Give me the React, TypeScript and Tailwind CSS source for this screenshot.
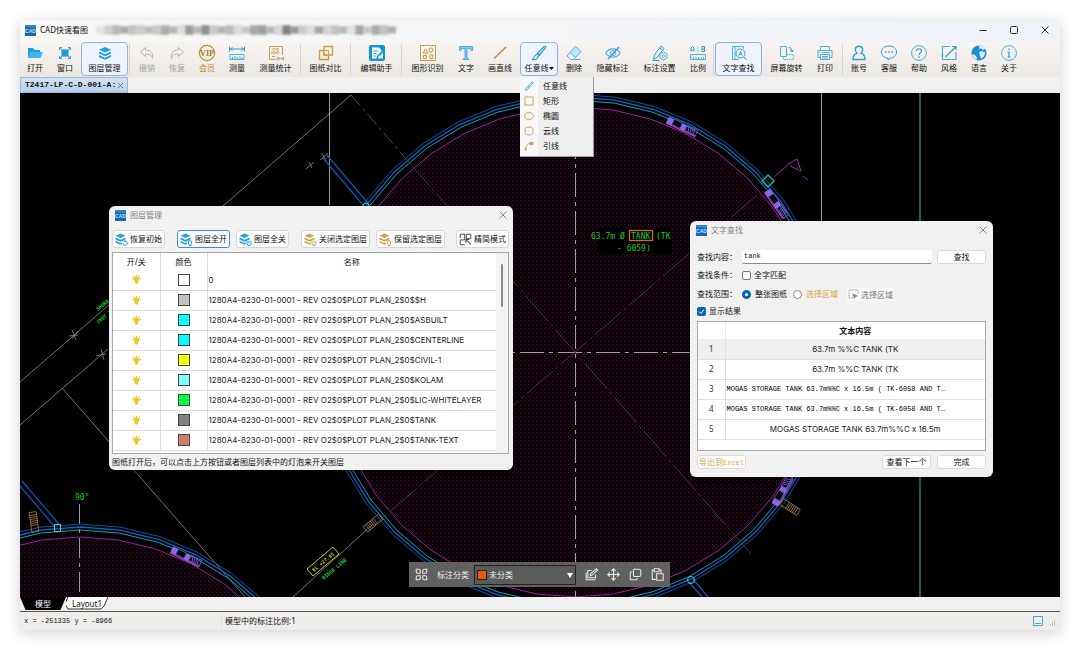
import React from 'react';
import { clsx } from 'clsx';

const BLUE = '#2a9fd8';
const SKY = '#4fb0e0';
const GOLD = '#c9a04a';
const GREY = '#b4b4b4';

const ICONS: Record<string, React.ReactNode> = {
  open: (
    <>
      <path d="M1 13V3h5l1.500 2H13v2H4z" fill="#1b9be0" />
      <path d="M4 7h12l-2.500 6H1z" fill="#3db5f0" />
    </>
  ),
  window: (
    <>
      <path d="M5 5h6v6H5z" fill="#1b9be0" stroke="#1b9be0" />
      <path d="M2.500 5V2.500H5M11 2.500h2.500V5M13.500 11v2.500H11M5 13.500H2.500V11M3 3l2 2M13 3l-2 2M13 13l-2-2M3 13l2-2" stroke={BLUE} />
    </>
  ),
  layers: (
    <>
      <path d="M8 2l6 2.800L8 7.500 2 4.800z" fill="#1e9fe2" />
      <path d="M2 6.500v2l6 2.800 6-2.800v-2L8 9.300z" fill="#1e9fe2" />
      <path d="M2 10v2l6 2.800L14 12v-2l-6 2.800z" fill="#1e9fe2" />
    </>
  ),
  undo: <path d="M6.500 2.500L1.500 7l5 4.500V9c4 0 6 1 7 4.500C14.500 8 12 5 6.500 5z" stroke={GREY} />,
  redo: <path d="M9.500 2.500l5 4.500-5 4.500V9c-4 0-6 1-7 4.500C1.500 8 4 5 9.500 5z" stroke={GREY} />,
  vip: (
    <>
      <circle cx="8" cy="8" r="7.600" stroke="#bd8a2c" strokeWidth="1.200" />
      <text x="8" y="10.700" fontSize="8" fontWeight="700" fontFamily="Liberation Serif, serif" textAnchor="middle" fill="#a8741c">VIP</text>
    </>
  ),
  measure: (
    <>
      <path d="M.5 1.500v5M15.500 1.500v5M1 4h14M3.500 2.500L1.500 4l2 1.500M12.500 2.500l2 1.500-2 1.500" stroke={BLUE} />
      <path d="M1 9.500h14v5H1zM3.500 14v-2M6 14v-3M8.500 14v-2M11 14v-3M13 14v-2" stroke={SKY} />
    </>
  ),
  stats: (
    <>
      <path d="M7 14.500H1.500v-13h13V10M4 9V6.500M6 9V5.500M8 9V6.500M10 9V4.500M4 4.500L6 3.500l2 1 3-1.500M4 11.500h3" stroke={GOLD} />
      <path d="M9 11.500v4M15.500 11.500v4M9.500 13.500h5.500M11.500 12l-1.500 1.500 1.500 1.500M13.500 12l1.500 1.500-1.500 1.500" stroke={GOLD} strokeWidth=".8" />
    </>
  ),
  compare: (
    <>
      <path d="M5.500 5.500h-4v9h9v-4" stroke={GOLD} strokeWidth="1.400" />
      <path d="M6 1.500h8.500V10H6z" stroke={GOLD} strokeWidth="1.400" />
      <path d="M5.500 5.500h5v5h-5z" stroke={GOLD} />
    </>
  ),
  editor: (
    <>
      <rect x="0" y="0" width="16" height="16" rx="2" fill="#0f95dc" />
      <path d="M3 2.500h7L12.500 5v1L8 11l-.5 2.500H3z" fill="#fff" />
      <path d="M4.500 6h4M4.500 8.500h3M4.500 11h2" stroke="#0f95dc" />
      <path d="M9 13.500l.5-2.500L14 6.500v7z" fill="#e5f5fd" />
      <path d="M9.500 9l1.500 1.500 3.500-4" stroke="#0f95dc" />
    </>
  ),
  shapes: (
    <>
      <path d="M.5.500h15v15H.5z" stroke={GOLD} />
      <path d="M3 8l2.500-4L8 8z" stroke={GOLD} />
      <circle cx="11" cy="5" r="2" stroke={GOLD} />
      <path d="M3.500 10.500h3v3h-3zM10 10h3v3.500h-3z" stroke={GOLD} />
    </>
  ),
  text: (
    <path d="M1.500 1.500h13v4h-1.500l-.5-2H9v10l2 .5v.5H5V14l2-.5v-10H3.500l-.5 2H1.500z" stroke={SKY} fill="#7cc7ec" />
  ),
  line: <path d="M2 13.500L14 2" stroke="#b98f45" strokeWidth="1.500" />,
  brush: (
    <>
      <path d="M6.500 8.500L13 1.500c1.500-.5 2 .5 1.500 1.500L8.500 10z" stroke={BLUE} fill="#d5ecfa" strokeWidth="1.200" />
      <path d="M6.500 8.500l2 2-1.500 1c-.5 2.500-2.500 3.500-5.500 3 1.500-1 1-3.500 3-4z" stroke={BLUE} strokeWidth="1.200" />
    </>
  ),
  eraser: (
    <>
      <path d="M9.500 1.500l5.500 5-5.500 6-5.500-5z" fill="#bfe5f7" stroke={SKY} />
      <path d="M4 7.500l-3 3.500 3.500 3.500h3l2-2M7.500 14.500h7" stroke={SKY} />
    </>
  ),
  hide: (
    <>
      <path d="M.8 8C4 2.500 12 2.500 15.200 8 12 13.500 4 13.500.8 8z" stroke={SKY} strokeWidth="1.200" />
      <circle cx="8" cy="8" r="2.500" stroke={SKY} />
      <path d="M14 2L3 14" stroke={BLUE} strokeWidth="1.200" />
    </>
  ),
  settings: (
    <>
      <path d="M9 1l3 2.500-7 9L1.500 14.500 2.500 10zM8 3l3 2.500M.5 15.500h7" stroke={BLUE} />
      <path d="M11.500 7l3.500 2v4l-3.500 2L8 13V9z" fill="#f3f1ee" stroke={SKY} />
      <circle cx="11.500" cy="11" r="1.300" stroke={SKY} />
    </>
  ),
  ratio: (
    <>
      <path d="M1 6.500V3l1.500-1.500L4 3v3.500M1 5h3M8 2.500v1M8 5.500v1M12 1.500v5h2.500v-5zM12 4h3" stroke={BLUE} />
      <path d="M.5 9.500h15v5H.5zM3.500 14v-2M6 14v-2M8.500 14v-2M11 14v-2M13.500 14v-2" stroke={SKY} />
    </>
  ),
  search: (
    <>
      <path d="M1.500 1.500h11v2M1.500 1.500v13H8M4 1.500v13" stroke={SKY} />
      <circle cx="9.500" cy="8.500" r="4.500" stroke={BLUE} />
      <path d="M13 12l2.500 3M8 10.500l1.500-4 1.500 4M8.500 9.300h2" stroke={BLUE} />
    </>
  ),
  rotate: (
    <>
      <path d="M1.500 1.500h6v10h-6z" stroke={SKY} />
      <path d="M7.500 9.500h7v5h-10v-3" stroke={SKY} strokeDasharray="1.500 1" />
      <path d="M9.500 2.500c2.500 0 3.500 1.500 3.500 4M11.500 5l1.500 2 1.500-2" stroke={BLUE} />
    </>
  ),
  print: (
    <>
      <path d="M3.500 5.500v-4h9v4M3.500 12.500H1v-7h14v7h-2.500" stroke={SKY} />
      <path d="M3.500 9.500h9v5h-9zM5 11.500h6M5 13h6M2.500 7.500h1M5 7.500h8" stroke={SKY} />
    </>
  ),
  account: (
    <path d="M8 1.200c4.500 0 4.500 5 2 7 3 1 4 3.300 4 6.300H2c0-3 1-5.300 4-6.300-2.500-2-2.500-7 2-7z" stroke={BLUE} strokeWidth="1.400" />
  ),
  service: (
    <>
      <path d="M8 1c4.500 0 7.500 2.500 7.500 6s-3 6-6 6L7 15v-2C3 13 .5 10.500.5 7S3.500 1 8 1z" stroke={BLUE} />
      <path d="M4 6.300h1.500v1.500H4zM7.300 6.300h1.500v1.500H7.300zM10.500 6.300H12v1.500h-1.500z" fill={BLUE} />
    </>
  ),
  help: (
    <>
      <circle cx="8" cy="8" r="7.400" stroke={SKY} />
      <path d="M5.500 6c0-3 5-3 5 0 0 1.500-2.500 2-2.500 4M8 11.300v1.400" stroke={BLUE} strokeWidth="1.200" />
    </>
  ),
  style: (
    <>
      <path d="M9 1.500H1.500v13H15V7" stroke={SKY} strokeWidth="1.200" />
      <path d="M11 1.500h4V5M15 1.500L4.500 12M1.500 12V9M5 14.500h3" stroke={BLUE} strokeWidth="1.200" />
    </>
  ),
  language: (
    <>
      <circle cx="8" cy="8" r="7.600" fill="#1d8fd0" />
      <path d="M8 .8c3 0 5 1.200 6.300 3.200L12 5 10 3.500 8.500 4zM8 7l3-1 3 1.500-.5 3L10.500 14 9 11z" fill="#d9eefa" />
      <path d="M1 9l3 1 2 2.500-.5 2.300C3 14 1 12 1 9z" fill="#d9eefa" />
    </>
  ),
  about: (
    <>
      <circle cx="8" cy="8" r="7.400" stroke={SKY} />
      <path d="M8 3.500v1.500M6.500 7H8v5M6.500 12h3" stroke={BLUE} strokeWidth="1.200" />
    </>
  ),
  rect: <path d="M1.500 1.500h13v13h-13z" stroke={GOLD} strokeWidth="1.500" />,
  ellipse: <ellipse cx="8" cy="8" rx="7" ry="5.500" stroke={GOLD} strokeWidth="1.500" />,
  cloud: (
    <path d="M3 3q1-2 3-1 2-1 4 0 2-1 3 1 2 1 1 3 1 2 0 4 1 2-1 3-1 2-3 1-2 1-4 0-2 1-3-1-2-1-1-3-1-2 0-4-1-2 1-3z" stroke={GOLD} strokeWidth="1.500" />
  ),
  leader: (
    <>
      <path d="M2 15l-.5-3 3 1zM3 12C4 6 6 4 10 4" fill="none" stroke={GOLD} strokeWidth="1.600" />
      <path d="M9 1.500h6v5H9z" fill={GOLD} />
    </>
  ),
  simple: (
    <>
      <path d="M7 14.500H1.500v-6H7M1.500 6V1.500H7v7M9 1.500h5.500V7H9z" stroke="#444" strokeWidth="1.200" />
      <path d="M8.500 8l6 6M8.500 12V8h4" stroke="#444" strokeWidth="1.300" />
    </>
  ),
  pick: (
    <>
      <path d="M7 13H1.500V1.500h13V7" stroke="#999" strokeDasharray="2.500 1.200" strokeWidth="1.300" />
      <path d="M6 6l9 4-4 1.500L9 15z" fill="#888" />
    </>
  ),
  bulb: (
    <>
      <path d="M8 3c6 0 6.500 5 3 7.500L10.500 15h-5L5 10.500C1.500 8 2 3 8 3z" fill="#ecc81a" />
      <path d="M8 0v2.500M2.500 1l2 2.500M13.500 1l-2 2.500M0 6.500h2.500M13.500 6.500H16" stroke="#dcb62a" strokeWidth="1.800" />
    </>
  ),
  grid: (
    <path d="M1.500 1.500h3a2 2 0 012 2v3h-3a2 2 0 01-2-2zM14.500 1.500h-3a2 2 0 00-2 2v3h3a2 2 0 002-2zM1.500 14.500v-3a2 2 0 012-2h3v3a2 2 0 01-2 2zM14.500 14.500h-3a2 2 0 01-2-2v-3h3a2 2 0 012 2z" stroke="#e8e8e8" strokeWidth="1.300" />
  ),
  edit: (
    <path d="M8 3H3.500v9H13V8M6.500 9.500L7 7l7-6 1.500 1.500-7 6.500zM1.500 5.500v9H13" stroke="#e8e8e8" strokeWidth="1.300" />
  ),
  move: (
    <path d="M8 1v14M1 8h14M5.500 3.500L8 1l2.500 2.500M5.500 12.500L8 15l2.500-2.500M3.500 5.500L1 8l2.500 2.500M12.500 5.500L15 8l-2.500 2.500" stroke="#e8e8e8" strokeWidth="1.500" />
  ),
  copy: (
    <path d="M6.500 1.500h6a2 2 0 012 2v5a2 2 0 01-2 2h-6a1 1 0 01-1-1v-7a1 1 0 011-1zM4 5H2.500a1 1 0 00-1 1v7.500a1 1 0 001 1H9a1 1 0 001-1V12" stroke="#e8e8e8" strokeWidth="1.300" />
  ),
  paste: (
    <path d="M6 14H1.500V2.500H4M10 2.500h2.500V6M4 1h6v3.500H4zM7 7h8v8H7z" stroke="#e8e8e8" strokeWidth="1.300" />
  ),
};

const Icon: React.FC<{ name: string; size?: number }> = ({ name, size = 16 }) => (
  <svg width={size} height={size} viewBox="0 0 16 16" fill="none" className="shrink-0 overflow-visible" aria-hidden="true">
    {ICONS[name]}
  </svg>
);

const AppLogo: React.FC = () => (
  <svg width="11" height="11" viewBox="0 0 11 11" className="shrink-0" aria-hidden="true">
    <rect width="11" height="11" fill="#1767b5" />
    <path d="M0 0h11v3L0 2z" fill="#2d87d6" />
    <text x="5.500" y="7.500" fontSize="5" fontWeight="700" textAnchor="middle" fill="#bfe0fa" fontFamily="Liberation Sans, sans-serif">CAD</text>
  </svg>
);

// Stacked sheets with a small badge in the lower right corner
const LayerIcon: React.FC<{ color: string; badge: string }> = ({ color, badge }) => (
  <svg width="13" height="13" viewBox="0 0 13 13" fill="none" className="shrink-0" aria-hidden="true">
    <path d="M5.500.500l5 2.300-5 2.200-5-2.200z" fill={color} />
    <path d="M.5 4.500l5 2.300 5-2.300v2l-3 1.500-2 .8-5-2.300zM.5 7.800l5 2.200 1.500-.5V11l-1.500.8-5-2.300z" fill={color} />
    {badge === 'reset' && <path d="M8 10.500a2.200 2.200 0 102-2.500M8.500 8l1.500-.2.3 1.500" stroke={color} />}
    {badge === 'on' && <path d="M10 7.500a2 2 0 011 3.500v1.500H9V11a2 2 0 011-3.500z" fill="#fff" stroke={color} />}
    {badge === 'off' && <path d="M8 8v2.500a2 2 0 004 0V8M10 7.500v3M9 12.500h2" stroke={color} />}
  </svg>
);

type Tool = { icon: string; label: string; w: string; active?: boolean; tone?: string; menu?: boolean };

const W2 = 'w-[30px]';
const W3 = 'w-[38px]';
const W4 = 'w-[47px]';

const TOOL_GROUPS: { sep: string; tools: Tool[] }[] = [
  {
    sep: 'mr-0.5',
    tools: [
      { icon: 'open', label: '打开', w: W2 },
      { icon: 'window', label: '窗口', w: W2 },
      { icon: 'layers', label: '图层管理', w: W4, active: true },
    ],
  },
  {
    sep: 'mx-px',
    tools: [
      { icon: 'undo', label: '撤销', w: W2, tone: 'text-[#a5a5a5]' },
      { icon: 'redo', label: '恢复', w: W2, tone: 'text-[#a5a5a5]' },
      { icon: 'vip', label: '会员', w: W2, tone: 'text-[#c08a2e]' },
      { icon: 'measure', label: '测量', w: W2 },
      { icon: 'stats', label: '测量统计', w: W4 },
    ],
  },
  { sep: 'ml-px mr-0.5', tools: [{ icon: 'compare', label: '图纸对比', w: W4 }] },
  { sep: 'ml-px mr-0.5', tools: [{ icon: 'editor', label: '编辑助手', w: W4 }] },
  {
    sep: '',
    tools: [
      { icon: 'shapes', label: '图形识别', w: W4 },
      { icon: 'text', label: '文字', w: W2 },
      { icon: 'line', label: '画直线', w: W3 },
      { icon: 'brush', label: '任意线', w: W3, active: true, menu: true },
      { icon: 'eraser', label: '删除', w: W2 },
      { icon: 'hide', label: '隐藏标注', w: W4 },
      { icon: 'settings', label: '标注设置', w: W4 },
      { icon: 'ratio', label: '比例', w: W2 },
    ],
  },
  {
    sep: 'ml-0.5 mr-px',
    tools: [
      { icon: 'search', label: '文字查找', w: W4, active: true },
      { icon: 'rotate', label: '屏幕旋转', w: W4 },
      { icon: 'print', label: '打印', w: W2 },
    ],
  },
  {
    sep: 'hidden',
    tools: [
      { icon: 'account', label: '账号', w: W2 },
      { icon: 'service', label: '客服', w: W2 },
      { icon: 'help', label: '帮助', w: W2 },
      { icon: 'style', label: '风格', w: W2 },
      { icon: 'language', label: '语言', w: W2 },
      { icon: 'about', label: '关于', w: W2 },
    ],
  },
];

const LINE_MENU = [
  { icon: 'brush', label: '任意线' },
  { icon: 'rect', label: '矩形' },
  { icon: 'ellipse', label: '椭圆' },
  { icon: 'cloud', label: '云线' },
  { icon: 'leader', label: '引线' },
];

const LAYER_PREFIX = '1280A4-8230-01-0001 - REV O2$0$PLOT PLAN_2$0$';
const LAYERS = [
  { color: 'bg-white', name: '0' },
  { color: 'bg-[#c0c0c0]', name: LAYER_PREFIX + '$H' },
  { color: 'bg-[#00ffff]', name: LAYER_PREFIX + 'ASBUILT' },
  { color: 'bg-[#00ffff]', name: LAYER_PREFIX + 'CENTERLINE' },
  { color: 'bg-[#ffff00]', name: LAYER_PREFIX + 'CIVIL-1' },
  { color: 'bg-[#7fffff]', name: LAYER_PREFIX + 'KOLAM' },
  { color: 'bg-[#00ff3f]', name: LAYER_PREFIX + 'LIC-WHITELAYER' },
  { color: 'bg-[#808080]', name: LAYER_PREFIX + 'TANK' },
  { color: 'bg-[#cc7b66]', name: LAYER_PREFIX + 'TANK-TEXT' },
];

const RESULTS = [
  { text: '63.7m %%C TANK (TK' },
  { text: '63.7m %%C TANK (TK' },
  { text: 'MOGAS STORAGE TANK 63.7m%%C x 16.5m ( TK-6058 AND T…', mono: true },
  { text: 'MOGAS STORAGE TANK 63.7m%%C x 16.5m ( TK-6058 AND T…', mono: true },
  { text: 'MOGAS STORAGE TANK 63.7m%%C x 16.5m' },
];

const MOSAIC = [
  '#e3e3e2', '#cfcfce', '#b9b9b8', '#a9a9a8', '#c3c3c2', '#cccccb', '#bcbcbb', '#c8c8c7', '#adadac', '#b4b4b3',
  '#dededd', '#9b9b9a', '#b5b5b4', '#8f8f8e', '#cacac9', '#b2b2b1', '#bdbdbc', '#d9d9d8', '#c6c6c5', '#a8a8a7',
  '#9d9d9c', '#b3b3b2', '#d5d5d5', '#828281', '#9a9a99', '#cdcdcd', '#dcdcdc', '#a3a3a3', '#d4d4d4', '#c4c4c4',
  '#b8b8b8', '#e0e0e0', '#a5a5a5', '#c9c9c9', '#a9a9a9', '#c0c0c0', '#b0b0b0',
];

const Toolbar: React.FC = () => (
  <div className="flex h-[35px] items-stretch bg-linear-to-b from-[#f7f4f1] to-[#ebe8e4]">
    {TOOL_GROUPS.map((group, g) => (
      <React.Fragment key={g}>
        {group.tools.map((tool) => (
          <div key={tool.label} className={clsx('relative shrink-0', tool.w, tool.active && 'mx-px')}>
            <button
              type="button"
              className={clsx(
                'flex h-[34px] w-full flex-col items-center rounded-sm border pt-[2px] leading-none whitespace-nowrap',
                tool.active ? 'border-[#8fb0ee] bg-[#eef3fd]' : 'border-transparent',
                tool.tone,
              )}
            >
              <Icon name={tool.icon} />
              <span className="mt-[3px] flex items-center">
                {tool.label}
                {tool.menu && (
                  <svg width="5" height="3" viewBox="0 0 5 3" aria-hidden="true">
                    <path d="M0 0h5L2.500 3z" fill="#111" />
                  </svg>
                )}
              </span>
            </button>
            {tool.menu && (
              <ul className="absolute top-full left-0 z-20 w-[74px] border-r border-b border-[#9a9a9a] bg-linear-to-r from-[#f8f8f8] from-25% to-[#efefef] to-25% pt-px pb-[3px]">
                {LINE_MENU.map((item) => (
                  <li key={item.label}>
                    <button type="button" className="flex h-[15px] w-full items-center gap-[9px] pl-1">
                      <Icon name={item.icon} size={10} />
                      {item.label}
                    </button>
                  </li>
                ))}
              </ul>
            )}
          </div>
        ))}
        <div className={clsx('my-0.5 w-px shrink-0 bg-[#d8d5d1]', group.sep)} />
      </React.Fragment>
    ))}
  </div>
);

const ringPoints = (cx: number, cy: number, r: number, n = 40) =>
  Array.from({ length: n }, (_, i) => {
    const a = (i / n) * Math.PI * 2 - Math.PI / 2;
    return `${(cx + r * Math.cos(a)).toFixed(1)},${(cy + r * Math.sin(a)).toFixed(1)}`;
  }).join(' ');

const Tank: React.FC<{ cx: number; cy: number }> = ({ cx, cy }) => (
  <g fill="none">
    <polygon points={ringPoints(cx, cy, 258)} stroke="#0a55a0" />
    <polygon points={ringPoints(cx, cy, 255)} stroke="#0b66bd" strokeWidth="1.300" />
    <polygon points={ringPoints(cx, cy, 252)} stroke="#149dc8" />
    <polygon points={ringPoints(cx, cy, 245)} stroke="#a01aa8" fill="url(#hatch)" />
  </g>
);

const Stair: React.FC<{ x: number; y: number; angle: number; color: string }> = ({ x, y, angle, color }) => (
  <g transform={`translate(${x} ${y}) rotate(${angle})`} stroke={color} fill="none" strokeWidth=".8">
    <path d="M-10-3.500h20v7h-20zM-3-3.500v7M-1-3.500v7M1-3.500v7M3-3.500v7M5-3.500v7M7-3.500v7" />
  </g>
);

const Platform: React.FC<{ x: number; y: number; angle: number }> = ({ x, y, angle }) => (
  <g transform={`translate(${x} ${y}) rotate(${angle})`}>
    <path d="M-18-3h6v7h-6zM-3-3h5v7h-5z" fill="#8a68dd" />
    <path d="M-12-3h9v6h-9z" fill="#000" stroke="#6a55c0" strokeWidth=".8" />
    <path d="M2-3h12v6H2zM4-3l2 6M6-3l2 6M8-3l2 6M10-3l2 6" stroke="#6d52bd" fill="none" />
    <path d="M-18 4h32" stroke="#b04ae0" />
  </g>
);

const Drawing: React.FC = () => (
  <svg
    viewBox="20 93 1040 504"
    preserveAspectRatio="xMidYMid slice"
    className="absolute inset-0 size-full"
    fontFamily="DejaVu Sans Mono, monospace"
    role="img"
    aria-label="Plot plan"
  >
    <defs>
      <pattern id="hatch" width="4" height="4" patternUnits="userSpaceOnUse">
        <rect width="4" height="4" fill="#080005" />
        <rect width="1" height="1" fill="#4a0f38" />
        <rect x="2" y="2" width="1" height="1" fill="#3c0c2f" />
      </pattern>
    </defs>

    <g stroke="#8f8f8f" fill="none" strokeWidth=".8">
      <path d="M351 95L20 382M20 425L108 349M62 388L245 597M373 524L293 597" />
      <path d="M329.500 93v112M821.500 93v130" stroke="#9c9c9c" strokeWidth="1" />
      <path d="M920 93v504" stroke="#1d7f70" strokeWidth="1.500" />
      <path d="M306 169l8-7M309 162l3 6M320 160l8-7M322 153l4 8M69 336l9-1M72 330l4 10M96 356l10-2M101 349l3 11M78 331l-6 8" />
      <path d="M351 95L407 160" stroke="#7e5a60" strokeDasharray="14 4 3 4" />
    </g>

    <Tank cx={575} cy={352} />
    <Tank cx={80} cy={782} />

    <g stroke="#0b56a6" strokeWidth="1.300">
      <path d="M322 157l42 49M326 154l42 49M20 486l35 41M22 481l37 43M689 582l13 15M693 579l15 18" />
    </g>
    <g fill="none" stroke="#58c8e6">
      <path d="M54.500 524.500h6v7h-6z" />
      <circle cx="691" cy="580" r="3.500" />
      <circle cx="366" cy="206" r="3" />
    </g>

    <g fill="none">
      <path d="M575.500 97v500M330 352.500h560" stroke="#b995ac" strokeDasharray="24 5 4 5" />
      <path d="M407 160L575 352 751 554M757 195L575 352 373 526" stroke="#70343f" strokeDasharray="34 4 3 4" strokeWidth=".8" />
      <path d="M79.500 504v93" stroke="#999" strokeDasharray="20 5 4 5" />
    </g>

    <Platform x={684} y={127} angle={25} />
    <Platform x={188} y={557} angle={26} />
    <Platform x={778} y={205} angle={55} />
    <Platform x={783} y={489} angle={-60} />
    <Stair x={373} y={523} angle={140} color="#a57b48" />
    <Stair x={790} y={507} angle={33} color="#a57b48" />
    <Stair x={34} y={522} angle={262} color="#a57b48" />

    <path d="M768 175l6 6-6 6-6-6z" fill="none" stroke="#17b09a" strokeWidth="1.500" />
    <path d="M774 177l16-14 7-4 4 12-11-5M803 176l5 4" fill="none" stroke="#a51fae" />

    <rect x="597" y="228" width="74" height="26" fill="#000" />
    <g fill="#18c926" fontSize="8">
      <text x="591" y="239">63.7m Ø</text>
      <text x="631" y="239">TANK</text>
      <text x="656" y="239">(TK</text>
      <text x="617" y="251">- 6059)</text>
      <text x="75" y="500">90°</text>
    </g>
    <rect x="629.500" y="230.500" width="23" height="10" fill="none" stroke="#e2661a" strokeWidth="1.300" />

    <path d="M307 569l26-22 6 7-26 22z" fill="none" stroke="#c6cc20" />
    <g fontSize="5" fontWeight="700">
      <text transform="translate(314 572) rotate(-40)" fill="#c6cc20">EL +27.85</text>
      <text transform="translate(324 580) rotate(-40)" fill="#16d824">RIDGE LINE</text>
      <text transform="translate(98 311) rotate(-38)" fill="#16d824">SHORE</text>
      <text transform="translate(98 324) rotate(-38)" fill="#16d824">(NOT TO</text>
    </g>
  </svg>
);

const DialogTitle: React.FC<{ title: string }> = ({ title }) => (
  <div className="flex h-[18px] items-center gap-1 px-1.5 text-[#858585]">
    <AppLogo />
    <h2 className="flex-1">{title}</h2>
    <button type="button" aria-label="关闭" className="flex size-2 items-center justify-center">
      <svg width="8" height="8" viewBox="0 0 8 8" stroke="#8a8a8a" aria-hidden="true">
        <path d="M.5.500l7 7M7.500.500l-7 7" />
      </svg>
    </button>
  </div>
);

const LayerButton: React.FC<{ icon: React.ReactNode; label: string; className?: string; selected?: boolean }> = ({
  icon,
  label,
  className,
  selected,
}) => (
  <button
    type="button"
    className={clsx(
      'flex h-[18px] items-center gap-0.5 rounded-[3px] border bg-[#fdfdfd] px-0.5 whitespace-nowrap',
      selected ? 'border-[#3b8fdc]' : 'border-[#d6d6d6]',
      className,
    )}
  >
    {icon}
    {label}
  </button>
);

const LayerDialog: React.FC = () => (
  <section className="absolute top-[113px] left-[89px] w-[404px] rounded-md bg-[#f1f1f1] pb-px shadow-lg">
    <DialogTitle title="图层管理" />
    <div className="mr-1 ml-[3px] mt-[6px] flex">
      <LayerButton icon={<LayerIcon color={BLUE} badge="reset" />} label="恢复初始" />
      <LayerButton icon={<LayerIcon color={BLUE} badge="on" />} label="图层全开" className="ml-3" selected />
      <LayerButton icon={<LayerIcon color={BLUE} badge="off" />} label="图层全关" className="ml-1.5" />
      <LayerButton icon={<LayerIcon color="#c9a85a" badge="off" />} label="关闭选定图层" className="ml-3" />
      <LayerButton icon={<LayerIcon color="#c9a85a" badge="on" />} label="保留选定图层" className="ml-1.5" />
      <LayerButton icon={<Icon name="simple" size={13} />} label="精简模式" className="ml-auto" />
    </div>
    <div className="mr-1 ml-[3px] mt-1 flex h-[202px] border border-[#a8a8a8] bg-white">
      <table className="flex-1 table-fixed border-collapse self-start">
        <thead>
          <tr className="h-[17px]">
            <th className="w-[47px] border-r border-[#dcdcdc] font-normal">开/关</th>
            <th className="w-[47px] border-r border-[#dcdcdc] font-normal">颜色</th>
            <th className="font-normal">名称</th>
          </tr>
        </thead>
        <tbody>
          {LAYERS.map((layer, i) => (
            <tr key={i} className="h-5 border-b border-[#dcdcdc]">
              <td className="border-r border-[#dcdcdc]">
                <span className="flex justify-center">
                  <Icon name="bulb" size={9} />
                </span>
              </td>
              <td className="border-r border-[#dcdcdc]">
                <span className={clsx('mx-auto block size-3 border border-[#444]', layer.color)} />
              </td>
              <td className="pl-px font-['Inter',sans-serif] whitespace-nowrap text-[#222]">{layer.name}</td>
            </tr>
          ))}
        </tbody>
      </table>
      <div className="w-3 bg-[#f3f3f3] pt-[11px]">
        <div className="mx-auto h-[43px] w-[2px] rounded bg-[#8a8a8a]" />
      </div>
    </div>
    <p className="px-[3px] leading-[15px]">图纸打开后，可以点击上方按钮或者图层列表中的灯泡来开关图层</p>
  </section>
);

const DIALOG_BUTTON = 'h-[14px] w-[49px] rounded-[3px] border border-[#dadada] bg-[#fdfdfd] leading-none whitespace-nowrap';

const SearchDialog: React.FC = () => (
  <section className="absolute top-[128px] left-[670px] w-[303px] rounded-md bg-[#f1f1f1] pb-2 shadow-lg">
    <DialogTitle title="文字查找" />
    <div className="flex flex-col px-[7px] pt-[10px]">
      <div className="flex h-[15px] items-center">
        <label htmlFor="query" className="w-[45px]">查找内容：</label>
        <input
          id="query"
          type="text"
          defaultValue="tank"
          className="h-[14px] min-w-0 flex-1 rounded-xs border-b border-[#8a8a8a] bg-white px-0.5 font-['Liberation_Mono',monospace] text-[7px] outline-none"
        />
        <button type="button" className={clsx(DIALOG_BUTTON, 'ml-[5px]')}>查找</button>
      </div>
      <div className="mt-1 flex h-[14px] items-center">
        <span className="w-[45px]">查找条件：</span>
        <label className="flex items-center gap-[3px]">
          <input type="checkbox" className="size-[9px] appearance-none rounded-xs border border-[#777] bg-white" />
          全字匹配
        </label>
      </div>
      <div className="mt-1 flex h-4 items-center">
        <span className="w-[45px]">查找范围：</span>
        <label className="flex items-center gap-1">
          <input type="radio" name="scope" defaultChecked className="size-[9px] appearance-none rounded-full border-[3px] border-[#0a63b8] bg-white" />
          整张图纸
        </label>
        <label className="ml-[6px] flex items-center gap-1 text-[#d5a04a]">
          <input type="radio" name="scope" className="size-[9px] appearance-none rounded-full border border-[#888] bg-white" />
          选择区域
        </label>
        <button type="button" className="ml-[9px] flex items-center gap-0.5 bg-[#f8f8f8] px-px py-px leading-[9px] text-[#777]">
          <Icon name="pick" size={11} />
          选择区域
        </button>
      </div>
      <label className="mt-[2px] flex h-[14px] items-center gap-[3px]">
        <span className="relative flex size-[9px]">
          <input type="checkbox" defaultChecked className="size-[9px] appearance-none rounded-xs bg-[#0a63b8]" />
          <svg viewBox="0 0 9 9" className="pointer-events-none absolute inset-0" fill="none" stroke="#fff" aria-hidden="true">
            <path d="M2 4.500l2 2 3-4" />
          </svg>
        </span>
        显示结果
      </label>
      <div className="mt-[3px] h-[130px] border border-[#a8a8a8] bg-white">
        <table className="w-full table-fixed border-collapse">
          <thead>
            <tr className="h-[17px]">
              <th className="w-[27px] border-r border-[#e8e8e8]" />
              <th className="font-bold">文本内容</th>
            </tr>
          </thead>
          <tbody>
            {RESULTS.map((row, i) => (
              <tr key={i} className={clsx('h-5 border-b border-[#e0e0e0]', i === 0 && 'bg-[#efefef]')}>
                <td className="border-r border-[#e0e0e0] text-center text-[#333]">{i + 1}</td>
                <td
                  className={clsx(
                    'whitespace-nowrap text-[#222]',
                    row.mono
                      ? "pl-px font-['Liberation_Mono',monospace] text-[7px] text-black"
                      : "text-center font-['Inter',sans-serif]",
                  )}
                >
                  {row.text}
                </td>
              </tr>
            ))}
          </tbody>
        </table>
      </div>
      <div className="mt-1 flex gap-[6px]">
        <button type="button" className={clsx(DIALOG_BUTTON, 'mr-auto text-[#d9a555]')}>
          导出到<span className="font-['Liberation_Mono',monospace] text-[7px]">Excel</span>
        </button>
        <button type="button" className={DIALOG_BUTTON}>查看下一个</button>
        <button type="button" className={DIALOG_BUTTON}>完成</button>
      </div>
    </div>
  </section>
);

const AnnotationBar: React.FC = () => (
  <div className="absolute bottom-[10px] left-[389px] flex h-[25px] w-[261px] items-center bg-[#606060] px-1.5 text-[#eee]">
    <Icon name="grid" size={13} />
    <label htmlFor="category" className="ml-[9px]">标注分类</label>
    <div className="relative ml-[5px] flex-1">
      <select
        id="category"
        className="h-5 w-full appearance-none rounded-none border border-[#222] bg-[#5b5b5b] pl-3.5 text-[8px] leading-none text-[#eee]"
      >
        <option>未分类</option>
      </select>
      <span className="pointer-events-none absolute top-[5px] left-[3px] size-[10px] border border-[#222] bg-[#e85a00]" />
      <svg width="6" height="5" viewBox="0 0 6 5" className="pointer-events-none absolute top-2 right-[3px]" aria-hidden="true">
        <path d="M0 0h6L3 5z" fill="#fff" />
      </svg>
    </div>
    <div className="ml-[9px] flex gap-[9px]">
      {[
        ['edit', '编辑'],
        ['move', '移动'],
        ['copy', '复制'],
        ['paste', '粘贴'],
      ].map(([icon, label]) => (
        <button key={icon} type="button" aria-label={label}>
          <Icon name={icon} size={13} />
        </button>
      ))}
    </div>
  </div>
);

export default function App() {
  return (
    <div className="flex min-h-screen flex-col bg-white p-5 font-['Noto_Sans','Noto_Sans_CJK_SC',sans-serif] text-[8px] text-[#111]">
      <main className="flex flex-1 flex-col shadow-[0_3px_14px_rgba(0,0,0,0.18)]">
        {/* Title bar */}
        <header className="flex h-[22px] items-center rounded-t bg-linear-to-r from-[#f8f8f5] to-[#eff3fa] pr-[11px] pb-[2px] pl-[5px]">
          <AppLogo />
          <h1 className="ml-1">CAD快速看图</h1>
          <svg width="300" height="12" viewBox="0 0 296 10" preserveAspectRatio="none" className="ml-2 blur-[1px]" aria-hidden="true">
            {MOSAIC.map((color, i) => (
              <rect key={i} x={i * 8} y={i % 3 === 0 ? 2 : 1} width="8" height={i % 3 === 0 ? 6 : 8} fill={color} />
            ))}
          </svg>
          <div className="ml-auto flex gap-[23px]">
            <button type="button" aria-label="最小化">
              <svg width="8" height="8" viewBox="0 0 8 8" stroke="#333" fill="none"><path d="M.5 4.500h7" /></svg>
            </button>
            <button type="button" aria-label="最大化">
              <svg width="8" height="8" viewBox="0 0 8 8" stroke="#333" fill="none"><rect x=".5" y=".5" width="7" height="7" rx="1" /></svg>
            </button>
            <button type="button" aria-label="关闭">
              <svg width="8" height="8" viewBox="0 0 8 8" stroke="#333" fill="none"><path d="M.5.500l7 7M7.500.500l-7 7" /></svg>
            </button>
          </div>
        </header>

        <Toolbar />

        {/* Open files */}
        <div className="flex h-4 bg-[#f0f0f0]">
          <div className="flex w-[108px] items-center gap-0.5 border border-[#9db8d8] bg-linear-to-b from-[#d3e3f3] to-[#b8d0ea] px-1">
            <span className="flex-1 overflow-hidden font-['Liberation_Mono',monospace] font-bold whitespace-nowrap">T2417-LP-C-D-001-A:</span>
            <button type="button" aria-label="关闭">
              <svg width="5" height="5" viewBox="0 0 5 5" stroke="#777"><path d="M0 0l5 5M5 0L0 5" /></svg>
            </button>
          </div>
        </div>

        {/* Drawing area with floating windows */}
        <div className="relative flex-1 overflow-hidden bg-black">
          <Drawing />
          <LayerDialog />
          <SearchDialog />
          <AnnotationBar />
        </div>

        {/* Model and layout tabs */}
        <div className="flex h-[15px] items-start border-b border-[#555] bg-[#f0f0f0]">
          <button type="button" className="h-[13px] w-[46px] bg-black leading-[13px] text-white [clip-path:polygon(0_0,100%_0,88%_100%,12%_100%)]">
            模型
          </button>
          <button type="button" className="relative h-[13px] w-[42px] leading-[13px]">
            <svg viewBox="0 0 42 13" className="absolute inset-0" fill="#fff" stroke="#333" aria-hidden="true">
              <path d="M2 0l-3 7 3 5h33l3-3 4-9" />
            </svg>
            <span className="relative">Layout1</span>
          </button>
        </div>

        <footer className="flex h-[18px] items-center bg-[#efedea] px-1">
          <span className="w-[197px] font-['Liberation_Mono',monospace] text-[7px]">x = -251335 y = -8966</span>
          <span className="border-l border-[#e0deda] pl-[3px]">模型中的标注比例:1</span>
          <svg width="24" height="12" viewBox="0 0 24 12" fill="none" className="ml-auto" aria-hidden="true">
            <path d="M1.500 1.500h9v9h-9zM3 8.500h6" stroke="#4fa3d8" />
            <path d="M22 6h1M20 8h1M22 8h1M18 10h1M20 10h1M22 10h1" stroke="#999" />
          </svg>
        </footer>
      </main>
    </div>
  );
}
